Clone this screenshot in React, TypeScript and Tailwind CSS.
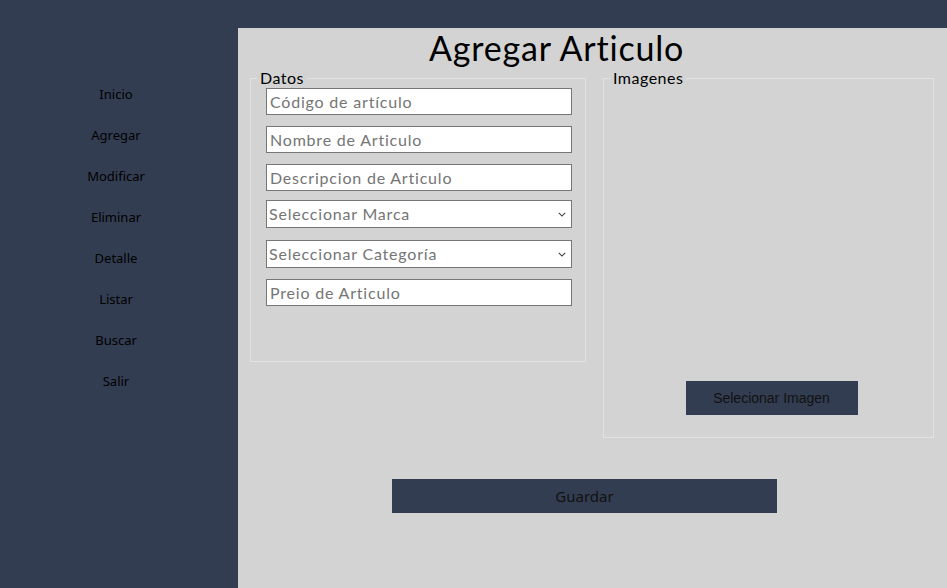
import React from "react";

const menu = ["Inicio", "Agregar", "Modificar", "Eliminar", "Detalle", "Listar", "Buscar", "Salir"];

const gothic = "font-['Lato','Noto_Sans',sans-serif]";

function Field({ placeholder }: { placeholder: string }) {
  return (
    <input
      type="text"
      placeholder={placeholder}
      className={`w-[306px] h-[27px] bg-white border border-[#767676] px-[3px] text-[16px] tracking-[0.8px] text-black placeholder:text-[#757575] outline-none ${gothic}`}
    />
  );
}

function Choice({ label }: { label: string }) {
  return (
    <div className="relative w-[306px] h-[28px]">
      <select
        defaultValue=""
        className={`appearance-none w-full h-full bg-white border border-[#767676] pl-[2px] text-[16px] tracking-[0.8px] text-[#757575] outline-none ${gothic}`}
      >
        <option value="" disabled>
          {label}
        </option>
      </select>
      <svg
        viewBox="0 0 10 6"
        className="absolute right-[6px] top-[12px] w-[8px] h-[5px] pointer-events-none"
        fill="none"
        stroke="#3c3c3c"
        strokeWidth="1.3"
      >
        <path d="M1 1l4 4 4-4" />
      </svg>
    </div>
  );
}

export default function App() {
  return (
    <div className="w-[947px] h-[588px] bg-[#333d51] flex flex-col overflow-hidden">
      <div className="h-[28px] shrink-0" />
      <div className="flex flex-1">
        <nav className="w-[238px] shrink-0 pt-[57px] flex flex-col">
          {menu.map((item) => (
            <a
              key={item}
              className="w-[232px] h-[41px] flex items-start justify-center text-[13px] text-black font-['Noto_Sans',sans-serif]"
            >
              {item}
            </a>
          ))}
        </nav>
        <main className="flex-1 bg-[#d3d3d3] flex flex-col">
          <h1 className={`h-[40px] leading-[40px] pl-[191px] text-[34px] tracking-[0.8px] text-black ${gothic}`}>
            Agregar Articulo
          </h1>
          <div className="flex gap-[17px] pl-[12px]">
            <fieldset className="w-[336px] min-w-0 shrink-0 h-[294px] border border-[#e2e2e2] pl-[15px] pr-[10px]">
              <legend className={`px-[3px] -ml-[9px] text-[16px] leading-[20px] tracking-[0.5px] text-black ${gothic}`}>Datos</legend>
              <div className="flex flex-col">
                <Field placeholder="Código de artículo" />
                <div className="mt-[11px]"><Field placeholder="Nombre de Articulo" /></div>
                <div className="mt-[11px]"><Field placeholder="Descripcion de Articulo" /></div>
                <div className="mt-[9px]"><Choice label="Seleccionar Marca" /></div>
                <div className="mt-[12px]"><Choice label="Seleccionar Categoría" /></div>
                <div className="mt-[11px]"><Field placeholder="Preio de Articulo" /></div>
              </div>
            </fieldset>
            <fieldset className="w-[331px] min-w-0 shrink-0 h-[370px] border border-[#e2e2e2] flex flex-col">
              <legend className={`px-[3px] ml-[6px] text-[16px] leading-[20px] tracking-[0.5px] text-black ${gothic}`}>Imagenes</legend>
              <div className="flex justify-center pt-[293px] pl-[6px]">
                <button className="w-[172px] h-[34px] bg-[#333d51] text-[14px] text-[#111111] font-['Liberation_Sans',Arial,sans-serif]">
                  Selecionar Imagen
                </button>
              </div>
            </fieldset>
          </div>
          <div className="pl-[154px] mt-[41px]">
            <button className="w-[385px] h-[34px] bg-[#333d51] text-[15px] text-[#111111] font-['Noto_Sans',sans-serif]">
              Guardar
            </button>
          </div>
        </main>
      </div>
    </div>
  );
}
